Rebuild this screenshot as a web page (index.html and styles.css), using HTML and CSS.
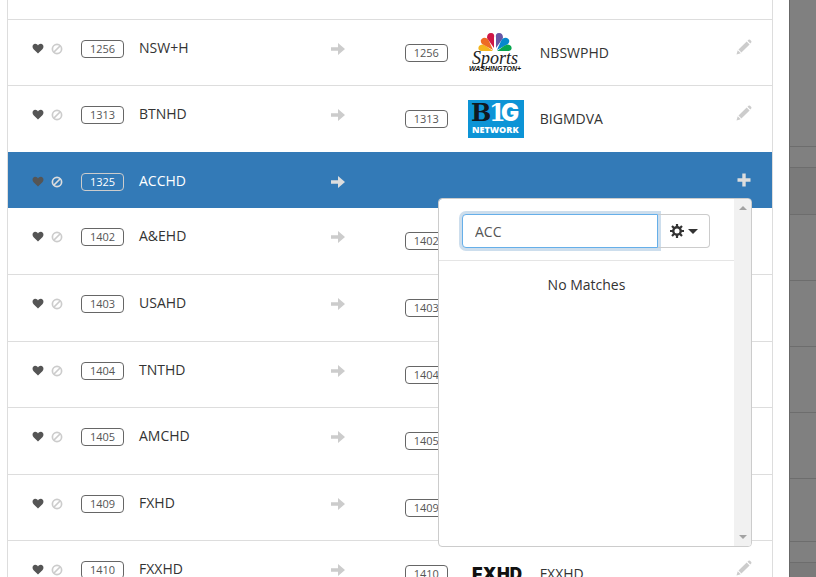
FILE: index.html
```
<!DOCTYPE html>
<html lang="en">
<head>
    <meta charset="UTF-8">
    <meta name="viewport" content="width=device-width, initial-scale=1.0">
    <title>Channel Lineup</title>
    <link rel="stylesheet" href="styles.css">
</head>
<body>

<svg width="0" height="0" class="sprites" aria-hidden="true">
    <symbol id="heart" viewBox="0 0 12 11">
        <path d="M6 10.500L1.600 6.200C-.4 4.200.6.800 3.200.800 4.500.800 5.500 1.500 6 2.600 6.500 1.500 7.500.800 8.800.800c2.600 0 3.600 3.400 1.600 5.400z"/>
    </symbol>
    <symbol id="ban" viewBox="0 0 12 12">
        <circle cx="6" cy="6" r="4.600" fill="none" stroke="currentColor" stroke-width="1.700"/>
        <path d="M3 9l6-6" stroke="currentColor" stroke-width="1.700"/>
    </symbol>
    <symbol id="arrow" viewBox="0 0 14 12">
        <path d="M0 4.200h7V0L14 6l-7 6V7.800H0z"/>
    </symbol>
    <symbol id="pencil" viewBox="0 0 16 16">
        <path d="M.500 15.500l1.200-4.300 3.100 3.100zM2.500 10.400l8.200-7.900 2.900 2.900-8.200 8.200zM11.500 1.700l1-1q.8-.6 1.600.1l1.100 1.100q.7.800 0 1.600l-.9 1z"/>
    </symbol>
    <symbol id="plus" viewBox="0 0 16 16">
        <path d="M6.300 1.500h3.400v4.800h4.800v3.400H9.700v4.800H6.300V9.700H1.500V6.300h4.800z"/>
    </symbol>
    <symbol id="gear" viewBox="0 0 14 14">
        <circle cx="7" cy="7" r="3.700" fill="none" stroke="currentColor" stroke-width="2.400"/>
        <path d="M7 0v3M7 11v3M0 7h3M11 7h3M2 2l2.200 2.200M9.800 9.800L12 12M12 2L9.800 4.200M4.200 9.800L2 12" stroke="currentColor" stroke-width="2.200"/>
    </symbol>
</svg>

<div class="page">
    <main class="modal">
        <ul class="channels">
            <li class="row first"></li>
            <li class="row">
                <svg class="heart"><use href="#heart"/></svg>
                <svg class="ban"><use href="#ban"/></svg>
                <span class="number">1256</span>
                <span class="name">NSW+H</span>
                <svg class="arrow"><use href="#arrow"/></svg>
                <div class="match">
                    <span class="number">1256</span>
                    <svg class="logo" viewBox="0 0 56 40" role="img" aria-label="NBC Sports Washington Plus">
                        <g transform="translate(27 18)">
                            <path d="M-2 0H-14Q-18-1-16-5-13-8-9-5z" fill="#f4b51e"/>
                            <path d="M-2-1L-13-7Q-16-11-12-13-8-14-6-10z" fill="#ee6b24"/>
                            <path d="M-1-3L-8-13Q-8-18-4-18 0-18-1-13z" fill="#cf1645"/>
                            <path d="M1-3V-13Q0-18 4-18 8-18 8-13z" fill="#6857a5"/>
                            <path d="M2-1L6-10Q8-14 12-13 16-11 13-7z" fill="#0788cc"/>
                            <path d="M2 0L9-5Q13-8 16-5 18-1 14 0z" fill="#08a650"/>
                        </g>
                        <text x="4" y="31" class="sports">Sports</text>
                        <text x="1" y="38" class="washington">WASHINGTON+</text>
                    </svg>
                    <span class="name">NBSWPHD</span>
                </div>
                <button class="edit" aria-label="Edit match"><svg><use href="#pencil"/></svg></button>
            </li>
            <li class="row">
                <svg class="heart"><use href="#heart"/></svg>
                <svg class="ban"><use href="#ban"/></svg>
                <span class="number">1313</span>
                <span class="name">BTNHD</span>
                <svg class="arrow"><use href="#arrow"/></svg>
                <div class="match">
                    <span class="number">1313</span>
                    <svg class="logo" viewBox="0 0 56 40" role="img" aria-label="Big Network">
                        <rect y="1" width="56" height="38" fill="#0d94d6"/>
                        <text x="3" y="22" class="big dark">B</text>
                        <text x="21" y="22" class="big">1</text>
                        <text x="33" y="22" class="big g">G</text>
                        <text x="4" y="34" class="network">NETWORK</text>
                    </svg>
                    <span class="name">BIGMDVA</span>
                </div>
                <button class="edit" aria-label="Edit match"><svg><use href="#pencil"/></svg></button>
            </li>
            <li class="row selected">
                <svg class="heart"><use href="#heart"/></svg>
                <svg class="ban"><use href="#ban"/></svg>
                <span class="number">1325</span>
                <span class="name">ACCHD</span>
                <svg class="arrow"><use href="#arrow"/></svg>
                <div class="match"></div>
                <button class="edit" aria-label="Add match"><svg><use href="#plus"/></svg></button>

                <div class="popover">
                    <div class="results">
                        <div class="search">
                            <input type="text" value="ACC" aria-label="Search channels">
                            <button class="options" aria-label="Search options">
                                <svg><use href="#gear"/></svg>
                                <span class="caret"></span>
                            </button>
                        </div>
                        <p>No Matches</p>
                    </div>
                    <div class="scrollbar">
                        <span class="up"></span>
                        <span class="down"></span>
                    </div>
                </div>
            </li>
            <li class="row">
                <svg class="heart"><use href="#heart"/></svg>
                <svg class="ban"><use href="#ban"/></svg>
                <span class="number">1402</span>
                <span class="name">A&amp;EHD</span>
                <svg class="arrow"><use href="#arrow"/></svg>
                <div class="match"><span class="number">1402</span></div>
                <button class="edit" aria-label="Edit match"><svg><use href="#pencil"/></svg></button>
            </li>
            <li class="row">
                <svg class="heart"><use href="#heart"/></svg>
                <svg class="ban"><use href="#ban"/></svg>
                <span class="number">1403</span>
                <span class="name">USAHD</span>
                <svg class="arrow"><use href="#arrow"/></svg>
                <div class="match"><span class="number">1403</span></div>
                <button class="edit" aria-label="Edit match"><svg><use href="#pencil"/></svg></button>
            </li>
            <li class="row">
                <svg class="heart"><use href="#heart"/></svg>
                <svg class="ban"><use href="#ban"/></svg>
                <span class="number">1404</span>
                <span class="name">TNTHD</span>
                <svg class="arrow"><use href="#arrow"/></svg>
                <div class="match"><span class="number">1404</span></div>
                <button class="edit" aria-label="Edit match"><svg><use href="#pencil"/></svg></button>
            </li>
            <li class="row">
                <svg class="heart"><use href="#heart"/></svg>
                <svg class="ban"><use href="#ban"/></svg>
                <span class="number">1405</span>
                <span class="name">AMCHD</span>
                <svg class="arrow"><use href="#arrow"/></svg>
                <div class="match"><span class="number">1405</span></div>
                <button class="edit" aria-label="Edit match"><svg><use href="#pencil"/></svg></button>
            </li>
            <li class="row">
                <svg class="heart"><use href="#heart"/></svg>
                <svg class="ban"><use href="#ban"/></svg>
                <span class="number">1409</span>
                <span class="name">FXHD</span>
                <svg class="arrow"><use href="#arrow"/></svg>
                <div class="match"><span class="number">1409</span></div>
                <button class="edit" aria-label="Edit match"><svg><use href="#pencil"/></svg></button>
            </li>
            <li class="row">
                <svg class="heart"><use href="#heart"/></svg>
                <svg class="ban"><use href="#ban"/></svg>
                <span class="number">1410</span>
                <span class="name">FXXHD</span>
                <svg class="arrow"><use href="#arrow"/></svg>
                <div class="match">
                    <span class="number">1410</span>
                    <svg class="logo" viewBox="0 0 56 40" role="img" aria-label="FX HD">
                        <text x="4" y="26" class="fx">FX</text>
                        <text x="29" y="26" class="fx hd">HD</text>
                    </svg>
                    <span class="name">FXXHD</span>
                </div>
                <button class="edit" aria-label="Edit match"><svg><use href="#pencil"/></svg></button>
            </li>
        </ul>
    </main>

    <!-- dimmed page behind the dialog -->
    <div class="backdrop">
        <div class="strip head"></div>
        <div class="strip label"></div>
        <div class="strip title"></div>
        <div class="strip"></div>
        <div class="strip"></div>
        <div class="strip"></div>
        <div class="strip"></div>
        <div class="strip last"></div>
        <div class="strip label"></div>
        <div class="strip title"></div>
    </div>
</div>

</body>
</html>
```
FILE: styles.css
```
* {
    box-sizing: border-box;
}
body {
    margin: 0;
    font-family: "Open Sans", "Noto Sans", sans-serif;
    font-size: 14px;
    line-height: 20px;
    color: #333;
    background-color: #fff;
}
.sprites {
    position: absolute;
}
svg {
    display: block;
    fill: currentColor;
}
.page {
    display: flex;
    height: 100vh;
    overflow: hidden;
}
.modal {
    flex: 1;
    padding: 0 16px 0 7px;
}

/* channel list */
.channels {
    list-style: none;
    margin: 0;
    padding: 0;
    border: solid #ddd;
    border-width: 0 1px;
}
.row {
    position: relative;
    display: flex;
    align-items: flex-start;
    min-height: 66px;
    padding: 18px 20px 0 24px;
    border-top: 1px solid #ddd;
}
.row.first {
    min-height: 19px;
    padding: 0;
    border-top: 0;
}
.heart {
    width: 12px;
    height: 11px;
    margin: 5px 7px 0 0;
    color: #555;
}
.ban {
    width: 12px;
    height: 12px;
    margin: 5px 18px 0 0;
    color: #ccc;
}
.number {
    width: 43px;
    height: 18px;
    margin-top: 2px;
    border: 1px solid #666;
    border-radius: 4px;
    font-size: 11px;
    line-height: 16px;
    text-align: center;
    color: #555;
}
.name {
    flex: 1;
    margin-left: 15px;
}
.arrow {
    width: 14px;
    height: 12px;
    margin: 5px 0 0;
    color: #ccc;
}
.match {
    display: flex;
    flex: none;
    width: 46%;
    height: 30px;
    margin-left: 60px;
    padding-top: 5px;
}
.match .number {
    margin-top: 1px;
}
.match .name {
    margin-left: 16px;
}
.logo {
    width: 56px;
    height: 40px;
    margin: -10px 0 0 20px;
}
.edit {
    margin-top: 1px;
    padding: 0;
    border: 0;
    background: none;
    color: #ccc;
    cursor: pointer;
}
.edit svg {
    width: 16px;
    height: 16px;
}

/* selected channel */
.selected {
    min-height: 57px;
    padding-top: 19px;
    border-top-color: #fff;
    background-color: #337ab7;
    background-clip: padding-box;
    color: #fff;
}
.selected .ban,
.selected .arrow,
.selected .edit {
    color: #ddd;
}
.selected .number {
    border-color: #ccc;
    color: #fff;
}
.selected + .row {
    border-top: 0;
}
.selected ~ .row:nth-child(even) {
    min-height: 67px;
}

/* match search */
.popover {
    position: absolute;
    z-index: 1;
    top: 46px;
    right: 20px;
    display: flex;
    width: 314px;
    height: 349px;
    border: 1px solid #ccc;
    border-radius: 4px;
    background-color: #fff;
    background-clip: padding-box;
    color: #333;
    overflow: hidden;
}
.results {
    flex: 1;
    min-width: 0;
}
.search {
    display: flex;
    padding: 15px 24px 12px 23px;
    border-bottom: 1px solid #e5e5e5;
}
.search input {
    flex: 1;
    min-width: 0;
    height: 34px;
    padding: 6px 12px;
    border: 1px solid #66afe9;
    border-radius: 4px 0 0 4px;
    outline: 0;
    box-shadow: 0 0 0 3px #cddeed;
    font: inherit;
    color: #555;
}
.options {
    display: flex;
    align-items: center;
    justify-content: center;
    gap: 4px;
    width: 52px;
    height: 34px;
    padding: 0;
    border: 1px solid #ccc;
    border-left: 0;
    border-radius: 0 4px 4px 0;
    background: none;
    color: #333;
}
.options svg {
    width: 14px;
    height: 14px;
}
.caret {
    border: solid transparent;
    border-width: 5px 5px 0;
    border-top-color: #333;
}
.results p {
    margin: 14px 0;
    text-align: center;
}
.scrollbar {
    display: flex;
    flex: none;
    flex-direction: column;
    align-items: center;
    justify-content: space-between;
    width: 17px;
    padding: 7px 0;
    background-color: #f1f1f1;
}
.up,
.down {
    border: solid transparent;
}
.up {
    border-width: 0 4px 4px;
    border-bottom-color: #a3a3a3;
}
.down {
    border-width: 4px 4px 0;
    border-top-color: #a3a3a3;
}

/* backdrop */
.backdrop {
    width: 27px;
    border-left: 1px solid #686868;
    background-color: #808080;
}
.strip {
    height: 66px;
    border-bottom: 1px solid #6d6d6d;
}
.strip.head {
    height: 147px;
}
.strip.label {
    height: 21px;
}
.strip.title {
    height: 47px;
    background-color: #7a7a7a;
}
.strip.last {
    height: 63px;
}

/* logos */
.sports {
    font: italic 400 18px "Liberation Serif", serif;
    fill: #222;
}
.washington {
    font: italic 700 7px "Liberation Sans", sans-serif;
    fill: #111;
}
.big {
    font: 700 24px "DejaVu Serif", serif;
    fill: #fff;
}
.big.dark {
    fill: #111820;
}
.big.g {
    font: 900 24px Inter, sans-serif;
}
.network {
    font: 800 9px "Open Sans", sans-serif;
    fill: #fff;
}
.fx {
    font: 900 18px Inter, sans-serif;
    fill: #111;
}
.fx.hd {
    font-size: 17px;
}
```
